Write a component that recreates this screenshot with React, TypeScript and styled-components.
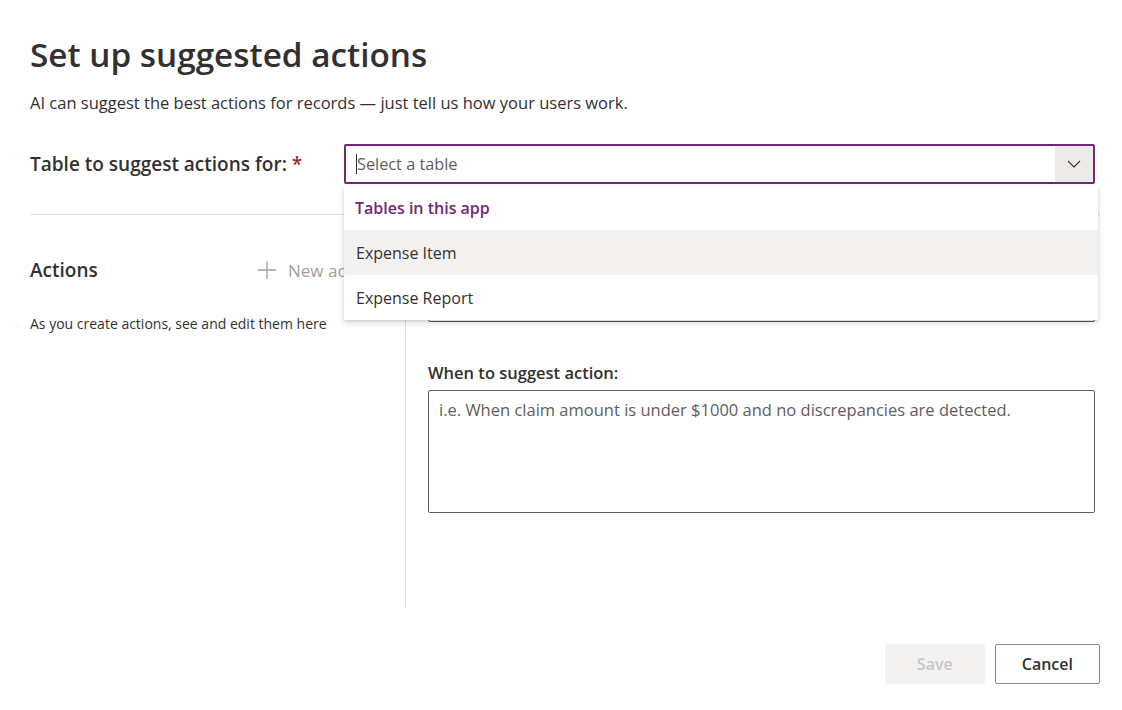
import React from "react";
import styled, { createGlobalStyle } from "styled-components";

const GlobalStyle = createGlobalStyle`
  html, body {
    margin: 0;
    padding: 0;
    background: #ffffff;
  }
  body {
    font-family: "Open Sans", "Noto Sans", "Liberation Sans", sans-serif;
    color: #323130;
  }
  * {
    box-sizing: border-box;
  }
`;

const Page = styled.div`
  width: 1122px;
  height: 710px;
  padding: 30px 22px 26px 30px;
  display: flex;
  flex-direction: column;
  overflow: hidden;
`;

const Title = styled.h1`
  margin: 0;
  font-size: 33.3px;
  font-weight: 600;
  line-height: 48px;
  color: #323130;
`;

const Subtitle = styled.p`
  margin: 13px 0 0;
  font-size: 16.5px;
  line-height: 24px;
  color: #323130;
`;

const TableRow = styled.div`
  display: flex;
  align-items: center;
  margin-top: 29px;
  padding-right: 5px;
  padding-bottom: 30px;
  border-bottom: 1px solid #e1dfdd;
`;

const FieldLabel = styled.label`
  width: 314px;
  flex-shrink: 0;
  font-size: 19px;
  font-weight: 600;
  color: #323130;
`;

const Required = styled.span`
  color: #a4262c;
  margin-left: 5px;
`;

const SelectWrap = styled.div`
  position: relative;
  flex: 1;
`;

const SelectBox = styled.div`
  height: 40px;
  display: flex;
  align-items: stretch;
  border: 2px solid #742774;
  border-radius: 2px;
  background: #ffffff;
`;

const SelectInput = styled.div`
  flex: 1;
  display: flex;
  align-items: center;
  padding-left: 10px;
  font-size: 16.3px;
  color: #605e5c;
`;

const Caret = styled.span`
  width: 1px;
  height: 20px;
  background: #323130;
`;

const ChevronButton = styled.div`
  width: 38px;
  display: flex;
  align-items: center;
  justify-content: center;
  background: #edebe9;
  color: #323130;
`;

const Dropdown = styled.div`
  position: absolute;
  top: calc(100% + 2px);
  left: 0;
  right: -3px;
  background: #ffffff;
  box-shadow: 0 3px 7px rgba(0, 0, 0, 0.13), 0 0.6px 2px rgba(0, 0, 0, 0.11);
  z-index: 10;
`;

const GroupHeader = styled.div`
  height: 44px;
  display: flex;
  align-items: center;
  padding-left: 11px;
  font-size: 16px;
  font-weight: 600;
  color: #742774;
`;

const Option = styled.div<{ $hover?: boolean }>`
  height: 45px;
  display: flex;
  align-items: center;
  padding-left: 12px;
  font-size: 16px;
  color: #323130;
  background: ${p => (p.$hover ? "#f3f2f1" : "#ffffff")};
`;

const Body = styled.div`
  display: flex;
  height: 393px;
`;

const LeftPane = styled.div`
  width: 376px;
  flex-shrink: 0;
  border-right: 1px solid #e1dfdd;
  padding-top: 43px;
`;

const ActionsHeader = styled.div`
  height: 24px;
  display: flex;
  align-items: center;
  justify-content: space-between;
  padding-right: 11px;
`;

const ActionsTitle = styled.h2`
  margin: 0;
  font-size: 19px;
  font-weight: 600;
  color: #323130;
`;

const NewButton = styled.button`
  border: none;
  background: none;
  padding: 0;
  display: flex;
  align-items: center;
  gap: 11px;
  font-family: inherit;
  font-size: 17px;
  color: #a19f9d;
  width: 137px;
  white-space: nowrap;
`;

const Hint = styled.p`
  margin: 32px 0 0;
  font-size: 14px;
  line-height: 20px;
  color: #323130;
`;

const RightPane = styled.div`
  flex: 1;
  padding: 46px 5px 0 22px;
`;

const SmallLabel = styled.div`
  font-size: 16.5px;
  font-weight: 600;
  color: #323130;
  line-height: 22px;
  margin-bottom: 6px;
`;

const TextInput = styled.div`
  height: 33px;
  border: 1px solid #605e5c;
  border-radius: 2px;
`;

const FieldGroup = styled.div`
  & + & {
    margin-top: 40px;
  }
`;

const TextArea = styled.div`
  height: 123px;
  border: 1px solid #605e5c;
  border-radius: 2px;
  padding: 8px 10px;
  font-size: 16.5px;
  line-height: 22px;
  color: #605e5c;
`;

const Footer = styled.div`
  display: flex;
  justify-content: flex-end;
  gap: 10px;
  margin-top: auto;
`;

const Button = styled.button<{ $disabled?: boolean }>`
  height: 40px;
  min-width: 100px;
  padding: 0 26px;
  border-radius: 2px;
  font-family: inherit;
  font-size: 16px;
  font-weight: 600;
  border: 1px solid ${p => (p.$disabled ? "#f3f2f1" : "#8a8886")};
  background: ${p => (p.$disabled ? "#f3f2f1" : "#ffffff")};
  color: ${p => (p.$disabled ? "#c8c6c4" : "#323130")};
`;

export default function App() {
  return (
    <>
      <GlobalStyle />
      <Page>
        <Title>Set up suggested actions</Title>
        <Subtitle>
          AI can suggest the best actions for records — just tell us how your users work.
        </Subtitle>
        <TableRow>
          <FieldLabel>
            Table to suggest actions for:<Required>*</Required>
          </FieldLabel>
          <SelectWrap>
            <SelectBox>
              <SelectInput>
                <Caret />
                Select a table
              </SelectInput>
              <ChevronButton>
                <svg width="14" height="8" viewBox="0 0 14 8" fill="none">
                  <path d="M1 1l6 6 6-6" stroke="#323130" strokeWidth="1.1" />
                </svg>
              </ChevronButton>
            </SelectBox>
            <Dropdown>
              <GroupHeader>Tables in this app</GroupHeader>
              <Option $hover>Expense Item</Option>
              <Option>Expense Report</Option>
            </Dropdown>
          </SelectWrap>
        </TableRow>
        <Body>
          <LeftPane>
            <ActionsHeader>
              <ActionsTitle>Actions</ActionsTitle>
              <NewButton>
                <svg width="20" height="20" viewBox="0 0 20 20" fill="none">
                  <path d="M10 1v18M1 10h18" stroke="#a19f9d" strokeWidth="1.3" />
                </svg>
                New action
              </NewButton>
            </ActionsHeader>
            <Hint>As you create actions, see and edit them here</Hint>
          </LeftPane>
          <RightPane>
            <FieldGroup>
              <SmallLabel>Action name:</SmallLabel>
              <TextInput />
            </FieldGroup>
            <FieldGroup>
              <SmallLabel>When to suggest action:</SmallLabel>
              <TextArea>
                i.e. When claim amount is under $1000 and no discrepancies are detected.
              </TextArea>
            </FieldGroup>
          </RightPane>
        </Body>
        <Footer>
          <Button $disabled>Save</Button>
          <Button>Cancel</Button>
        </Footer>
      </Page>
    </>
  );
}
